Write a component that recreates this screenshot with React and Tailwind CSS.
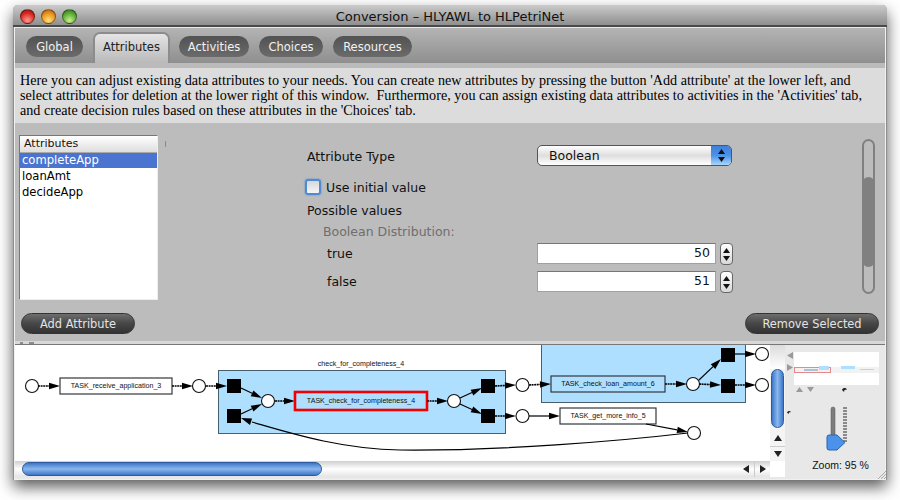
import React from "react";

const tabs = [
  { label: "Global", width: "w-[57px]" },
  { label: "Attributes", width: "w-[77px] -mr-[1px]", active: true },
  { label: "Activities", width: "w-[70px]" },
  { label: "Choices", width: "w-[64px]" },
  { label: "Resources", width: "w-[79px]" },
];

const Light = ({ color }) => (
  <div className={`h-[15px] w-[15px] rounded-full border border-black/40 ${color}`} />
);

const Tab = ({ label, width, active }) =>
  active ? (
    <div
      className={`${width} flex h-[31px] items-start justify-center self-end rounded-t-[7px] border-x-2 border-t-2 border-[#8c8c8c] bg-linear-to-b from-[#e4e4e4] to-[#b9b9b9] pt-[5px] text-[11.5px] text-[#222]`}
    >
      {label}
    </div>
  ) : (
    <div
      className={`${width} mt-[8px] flex h-[21px] items-center justify-center rounded-full bg-linear-to-b from-[#525252] to-[#6b6b6b] pt-[2px] text-[11.5px] text-[#f2f2f2]`}
    >
      {label}
    </div>
  );

const PillButton = ({ label, width }) => (
  <div
    className={`${width} flex h-[21px] items-center justify-center rounded-full border border-[#333] bg-linear-to-b from-[#6e6e6e] via-[#474747] to-[#333] pt-[2px] text-[11.4px] text-[#e4e4e4]`}
  >
    {label}
  </div>
);

const Spinner = () => (
  <div className="ml-[4px] flex h-[22px] w-[13px] flex-col items-center justify-center gap-[3px] rounded-[4px] border border-[#666] bg-linear-to-b from-white to-[#d8d8d8]">
    <svg width="7" height="5" viewBox="0 0 7 5">
      <path d="M3.5 0 L7 5 L0 5 Z" fill="#111" />
    </svg>
    <svg width="7" height="5" viewBox="0 0 7 5">
      <path d="M0 0 L7 0 L3.5 5 Z" fill="#111" />
    </svg>
  </div>
);

const NumberRow = ({ label, value }) => (
  <div className="flex h-[22px] items-start">
    <span className="ml-[20px] w-[210px] leading-[22px]">{label}</span>
    <div className="flex h-[21px] w-[179px] items-center justify-end border border-[#a0a0a0] border-t-[#777] bg-white pr-[5px]">
      {value}
    </div>
    <Spinner />
  </div>
);

const Place = ({ x, y }) => <circle cx={x} cy={y} r="6.5" fill="white" stroke="#111" strokeWidth="1.1" />;

const Square = ({ x, y }) => <rect x={x} y={y} width="14" height="14" fill="#000" />;

const Arrow = ({ x1, y1, x2, y2, dotted }) => {
  const angle = Math.atan2(y2 - y1, x2 - x1);
  const length = 11;
  const spread = 3.2;
  const baseX = x2 - Math.cos(angle) * length;
  const baseY = y2 - Math.sin(angle) * length;
  const offX = Math.sin(angle) * spread;
  const offY = Math.cos(angle) * spread;
  return (
    <g>
      <line
        x1={x1}
        y1={y1}
        x2={baseX}
        y2={baseY}
        stroke="#000"
        strokeWidth={dotted ? 1.6 : 1.2}
        strokeDasharray={dotted ? "2 0.6" : undefined}
      />
      <polygon points={`${x2},${y2} ${baseX + offX},${baseY - offY} ${baseX - offX},${baseY + offY}`} fill="#000" />
    </g>
  );
};

const Task = ({ x, y, w, h = 16, label, red, fill = "white" }) => (
  <g>
    <rect
      x={x}
      y={y}
      width={w}
      height={h}
      fill={fill}
      stroke={red ? "#f00000" : "#33383c"}
      strokeWidth={red ? 2.6 : 1.2}
    />
    <text x={x + w / 2} y={y + h / 2 + 1.5} textAnchor="middle" fontSize="7.1" fill="#111" fontFamily="Liberation Sans, sans-serif">
      {label}
    </text>
  </g>
);

const PetriNet = () => (
  <svg className="block bg-white" width="755" height="116" viewBox="15 346 755 116">
    <rect x="218.5" y="371.5" width="287" height="63" fill="#aedfff" stroke="#47606f" strokeWidth="1" />
    <rect x="541.5" y="340" width="204" height="63.5" fill="#aedfff" stroke="#47606f" strokeWidth="1" />
    <text x="361" y="366.5" textAnchor="middle" fontSize="7.1" fill="#111" fontFamily="Liberation Sans, sans-serif">
      check_for_completeness_4
    </text>

    <Place x={32} y={387} />
    <Arrow x1={38} y1={387} x2={60} y2={387} dotted />
    <Task x={60} y={379} w={112} label="TASK_receive_application_3" />
    <Arrow x1={172} y1={387} x2={193} y2={387} dotted />
    <Place x={199} y={387} />
    <Arrow x1={206} y1={387} x2={227} y2={387} dotted />
    <Square x={227} y={380} />
    <Square x={227} y={410} />
    <Arrow x1={241} y1={389} x2={262} y2={399} />
    <Arrow x1={241} y1={415} x2={262} y2={405} />
    <Place x={268} y={402} />
    <Arrow x1={275} y1={402} x2={295} y2={402} dotted />
    <Task x={295} y={393} w={132} h={18} label="TASK_check_for_completeness_4" red fill="#aedfff" />
    <Arrow x1={427} y1={402} x2={448} y2={402} dotted />
    <Place x={454} y={402} />
    <Arrow x1={460} y1={399} x2={482} y2={389} />
    <Arrow x1={460} y1={405} x2={482} y2={415} />
    <Square x={481} y={380} />
    <Square x={481} y={410} />
    <Arrow x1={495} y1={387} x2={516} y2={386} dotted />
    <Arrow x1={495} y1={417} x2={516} y2={417} dotted />
    <Place x={522.5} y={386} />
    <Place x={522.5} y={417} />
    <Arrow x1={529} y1={386} x2={551} y2={385} dotted />
    <Arrow x1={529} y1={417} x2={560} y2={417} />
    <Task x={551} y={377} w={114} label="TASK_check_loan_amount_6" fill="#aedfff" />
    <Task x={560} y={409} w={96} label="TASK_get_more_info_5" />
    <Arrow x1={665} y1={385} x2={687} y2={385} dotted />
    <Place x={693} y={385} />
    <Arrow x1={699} y1={381} x2={721} y2={360} />
    <Arrow x1={699} y1={385} x2={721} y2={386} dotted />
    <Square x={721} y={349} />
    <Square x={721} y={380} />
    <Arrow x1={735} y1={355} x2={756} y2={355} />
    <Arrow x1={735} y1={386} x2={756} y2={386} dotted />
    <Place x={762} y={355} />
    <Place x={762} y={386} />
    <Arrow x1={646} y1={425} x2={688} y2={433} />
    <path d="M688 434 C 620 442 500 452 400 451 C 340 450 290 434 252 423" fill="none" stroke="#000" strokeWidth="1.2" />
    <polygon points="241,419 252,419.5 250,426" fill="#000" />
    <Place x={694} y={434} />
  </svg>
);

const MiniMap = () => (
  <svg className="block" width="85" height="33" viewBox="0 0 85 33">
    <rect width="85" height="33" fill="white" />
    <rect x="0" y="15" width="85" height="6" fill="#f2f2f2" />
    <rect x="0.5" y="15.5" width="36" height="5" fill="#fbeeee" stroke="#e58a8a" />
    <rect x="10" y="17" width="14" height="2" fill="#9fc8e0" />
    <rect x="25" y="14" width="10" height="4" fill="#aedfff" />
    <rect x="47" y="14" width="14" height="3" fill="#aedfff" />
    <rect x="66" y="17" width="14" height="1" fill="#cfcfcf" />
  </svg>
);

const ZoomSlider = () => (
  <svg className="block" width="101" height="45" viewBox="0 0 101 45">
    <path d="M2 6.5 C3 4.5 5 4.5 6 6 L4 6.5 L3.5 8 Z" fill="#222" />
    <rect x="46" y="1" width="4" height="36" rx="2" fill="#7d7d7d" stroke="#555" strokeWidth="0.5" />
    {Array.from({ length: 12 }, (_, index) => (
      <rect key={index} x="58" y={1 + index * 3} width="4" height="2" fill="#8a8a8a" />
    ))}
    <path d="M42 31 a2 2 0 0 1 2 -2 H52 L60 36.5 L52 44 H44 a2 2 0 0 1 -2 -2 Z" fill="#4b93ea" stroke="#2e62a8" />
  </svg>
);

export default function App() {
  return (
    <div className="h-[500px] w-[900px] overflow-hidden bg-white pt-[5px] pl-[13px] font-['DejaVu_Sans',sans-serif] text-[12.5px] text-[#111]">
      <div className="flex h-[475px] w-[874px] flex-col rounded-t-[5px] bg-[#8e8e8e] shadow-[0_7px_15px_rgba(0,0,0,0.65)]">
        {/* title bar */}
        <div className="flex h-[22px] shrink-0 items-center rounded-t-[5px] border-b-2 border-[#4a4a4a] bg-linear-to-b from-[#cbcbcb] to-[#8f8f8f] pt-[2px] pl-[7px]">
          <div className="flex gap-[6px]">
            <Light color="bg-[radial-gradient(circle_at_50%_80%,#ff9a90,#d8281f_60%,#8c1410)]" />
            <Light color="bg-[radial-gradient(circle_at_50%_80%,#ffe27a,#e8901c_60%,#a85c10)]" />
            <Light color="bg-[radial-gradient(circle_at_50%_80%,#c8f08c,#5aa832_60%,#2f7018)]" />
          </div>
          <div className="flex-1 pt-[1px] pr-[64px] text-center text-[13px] text-[#111]">Conversion – HLYAWL to HLPetriNet</div>
        </div>

        {/* window body */}
        <div className="mx-[1px] flex min-h-0 flex-1 flex-col border-x border-b border-[#f0f0f0]">
          <div className="flex h-[36px] shrink-0 gap-[10px] border-t border-[#e8e8e8] bg-linear-to-b from-[#b4b4b4] to-[#8f8f8f] pl-[11px]">
            {tabs.map((tab) => (
              <Tab key={tab.label} {...tab} />
            ))}
          </div>
          <div className="h-[5px] shrink-0 bg-[#bbbbbb]" />
          <div className="h-[55px] shrink-0 bg-[#dcdcdc] pt-[5px] pl-[5px] font-['Liberation_Serif',serif] text-[14.17px] leading-[15px] whitespace-pre text-black">
            {"Here you can adjust existing data attributes to your needs. You can create new attributes by pressing the button 'Add attribute' at the lower left, and\nselect attributes for deletion at the lower right of this window.  Furthermore, you can assign existing data attributes to activities in the 'Activities' tab,\nand create decision rules based on these attributes in the 'Choices' tab."}
          </div>

          {/* attribute panel */}
          <div className="flex h-[218px] shrink-0 flex-col bg-[#bcbcbc] pt-[12px] pr-[5px] pl-[4px]">
            <div className="flex h-[165px] shrink-0">
              <div className="h-[165px] w-[139px] shrink-0 border border-[#eee] border-t-[#777] border-l-[#777] bg-white">
                <div className="h-[17px] border-b border-[#aaa] bg-linear-to-b from-white to-[#dedede] pl-[4px] text-[11px] leading-[16px] text-[#111]">
                  Attributes
                </div>
                <div className="h-[15px] bg-[#4a74cf] pl-[2px] text-[11.6px] leading-[15px] text-white">completeApp</div>
                <div className="pl-[2px] text-[11.6px] leading-[16px] text-black">loanAmt</div>
                <div className="pl-[2px] text-[11.6px] leading-[16px] text-black">decideApp</div>
              </div>
              <div className="mt-[6px] ml-[7px] h-[6px] w-px shrink-0 bg-[#8c8c8c]" />
              <div className="ml-[141px] flex w-[430px] shrink-0 flex-col">
                <div className="mt-[10px] flex h-[21px] items-center">
                  <span className="w-[230px] pt-[3px]">Attribute Type</span>
                  <div className="flex h-[21px] w-[195px] overflow-hidden rounded-[5px] border border-[#555] bg-linear-to-b from-white via-[#dedede] to-white">
                    <span className="flex-1 pl-[11px] leading-[19px]">Boolean</span>
                    <div className="flex w-[20px] flex-col items-center justify-center gap-[3px] bg-linear-to-b from-[#3e7fdc] via-[#4b92e8] to-[#a8d6fb]">
                      <svg width="7" height="5" viewBox="0 0 7 5">
                        <path d="M3.5 0 L7 5 L0 5 Z" fill="#111" />
                      </svg>
                      <svg width="7" height="5" viewBox="0 0 7 5">
                        <path d="M0 0 L7 0 L3.5 5 Z" fill="#111" />
                      </svg>
                    </div>
                  </div>
                </div>
                <div className="mt-[12px] -ml-[2px] flex h-[18px] items-center">
                  <div className="h-[16px] w-[16px] rounded-[3px] border-2 border-[#4f8bd4] bg-linear-to-b from-[#d8d8d8] to-[#f6f6f6] shadow-[0_0_2px_#4f8bd4]" />
                  <span className="ml-[5px] pt-[2px]">Use initial value</span>
                </div>
                <div className="mt-[7px] h-[15px] leading-[15px]">Possible values</div>
                <div className="mt-[6px] ml-[16px] h-[15px] leading-[15px] text-[#6e6e6e]">Boolean Distribution:</div>
                <div className="mt-[4px] flex flex-col gap-[6px]">
                  <NumberRow label="true" value="50" />
                  <NumberRow label="false" value="51" />
                </div>
              </div>
              <div className="mt-[4px] ml-[125px] flex h-[155px] w-[13px] shrink-0 flex-col rounded-full border-2 border-[#808080]">
                <div className="-mx-[2px] mt-[36px] h-[90px] rounded-full bg-[#808080]" />
              </div>
            </div>
            <div className="mt-[13px] flex justify-between pr-[1px] pl-[2px]">
              <PillButton label="Add Attribute" width="w-[114px]" />
              <PillButton label="Remove Selected" width="w-[134px]" />
            </div>
          </div>

          <div className="flex h-[3px] shrink-0 items-center gap-[6px] bg-[#d8d8d8] pl-[5px]">
            <div className="h-[2px] w-[3px] bg-[#8c8c8c]" />
            <div className="h-[2px] w-[5px] bg-[#8c8c8c]" />
          </div>

          {/* graph pane */}
          <div className="flex min-h-0 flex-1 border-t border-[#777] bg-[#e8e8e8]">
            <div className="flex w-[770px] shrink-0 flex-col">
              <div className="flex h-[116px]">
                <PetriNet />
                <div className="flex w-[15px] shrink-0 flex-col items-center bg-[#f4f4f4]">
                  <div className="h-[24px] w-full bg-linear-to-b from-[#dcdcdc] to-white" />
                  <div className="h-[59px] w-[13px] rounded-full border border-[#2c5ba0] bg-linear-to-r from-[#3f76c8] via-[#8ab8ee] to-[#3f76c8]" />
                  <div className="mt-[2px] flex h-[15px] items-center">
                    <svg width="8" height="6" viewBox="0 0 8 6">
                      <path d="M4 0 L8 6 L0 6 Z" fill="#222" />
                    </svg>
                  </div>
                  <div className="mt-[1px] flex h-[15px] w-full items-center justify-center border-t border-[#ccc]">
                    <svg width="8" height="6" viewBox="0 0 8 6">
                      <path d="M0 0 L8 0 L4 6 Z" fill="#222" />
                    </svg>
                  </div>
                </div>
              </div>
              <div className="flex h-[16px] items-center">
                <div className="flex h-full flex-1 items-center bg-linear-to-b from-[#cfcfcf] via-white to-[#e4e4e4] pl-[7px]">
                  <div className="h-[14px] w-[300px] rounded-full border border-[#2c5ba0] bg-linear-to-b from-[#3f76c8] via-[#8ab8ee] to-[#3f76c8]" />
                  <div className="flex-1" />
                  <div className="flex h-full w-[16px] items-center justify-center">
                    <svg width="6" height="8" viewBox="0 0 6 8">
                      <path d="M6 0 L6 8 L0 4 Z" fill="#222" />
                    </svg>
                  </div>
                  <div className="flex h-full w-[16px] items-center justify-center border-l border-[#ccc]">
                    <svg width="6" height="8" viewBox="0 0 6 8">
                      <path d="M0 0 L6 4 L0 8 Z" fill="#222" />
                    </svg>
                  </div>
                </div>
                <div className="h-full w-[15px] shrink-0 bg-white" />
              </div>
            </div>

            <div className="relative flex w-[101px] shrink-0 flex-col">
              <div className="mt-[7px] flex">
                <div className="ml-[2px] flex w-[6px] flex-col gap-[5px]">
                  <svg width="6" height="7" viewBox="0 0 6 7">
                    <path d="M6 0 L6 7 L0 3.5 Z" fill="#9a9a9a" />
                  </svg>
                  <svg width="6" height="7" viewBox="0 0 6 7">
                    <path d="M0 0 L6 3.5 L0 7 Z" fill="#9a9a9a" />
                  </svg>
                </div>
                <div className="ml-[1px]">
                  <MiniMap />
                </div>
              </div>
              <div className="mt-[2px] ml-[11px] flex h-[7px] gap-[4px]">
                <svg width="7" height="5" viewBox="0 0 7 5">
                  <path d="M3.5 0 L7 5 L0 5 Z" fill="#9a9a9a" />
                </svg>
                <svg width="7" height="5" viewBox="0 0 7 5">
                  <path d="M0 0 L7 0 L3.5 5 Z" fill="#9a9a9a" />
                </svg>
                <svg className="ml-[24px]" width="5" height="5" viewBox="0 0 5 5">
                  <path d="M0 3 C1 0.5 3.5 0.5 5 2.5 L2.5 3 L2 5 Z" fill="#222" />
                </svg>
              </div>
              <div className="mt-[12px]">
                <ZoomSlider />
              </div>
              <div className="mt-[6px] pl-[10px] text-center font-['Liberation_Sans',sans-serif] text-[10.5px] leading-[16px] text-[#111]">
                Zoom: 95 %
              </div>
              <svg className="absolute right-0 bottom-0" width="8" height="8" viewBox="0 0 8 8">
                <path d="M0 8 L8 0 M3 8 L8 3 M6 8 L8 6" stroke="#999" strokeWidth="0.8" />
              </svg>
            </div>
          </div>
        </div>
      </div>
    </div>
  );
}
